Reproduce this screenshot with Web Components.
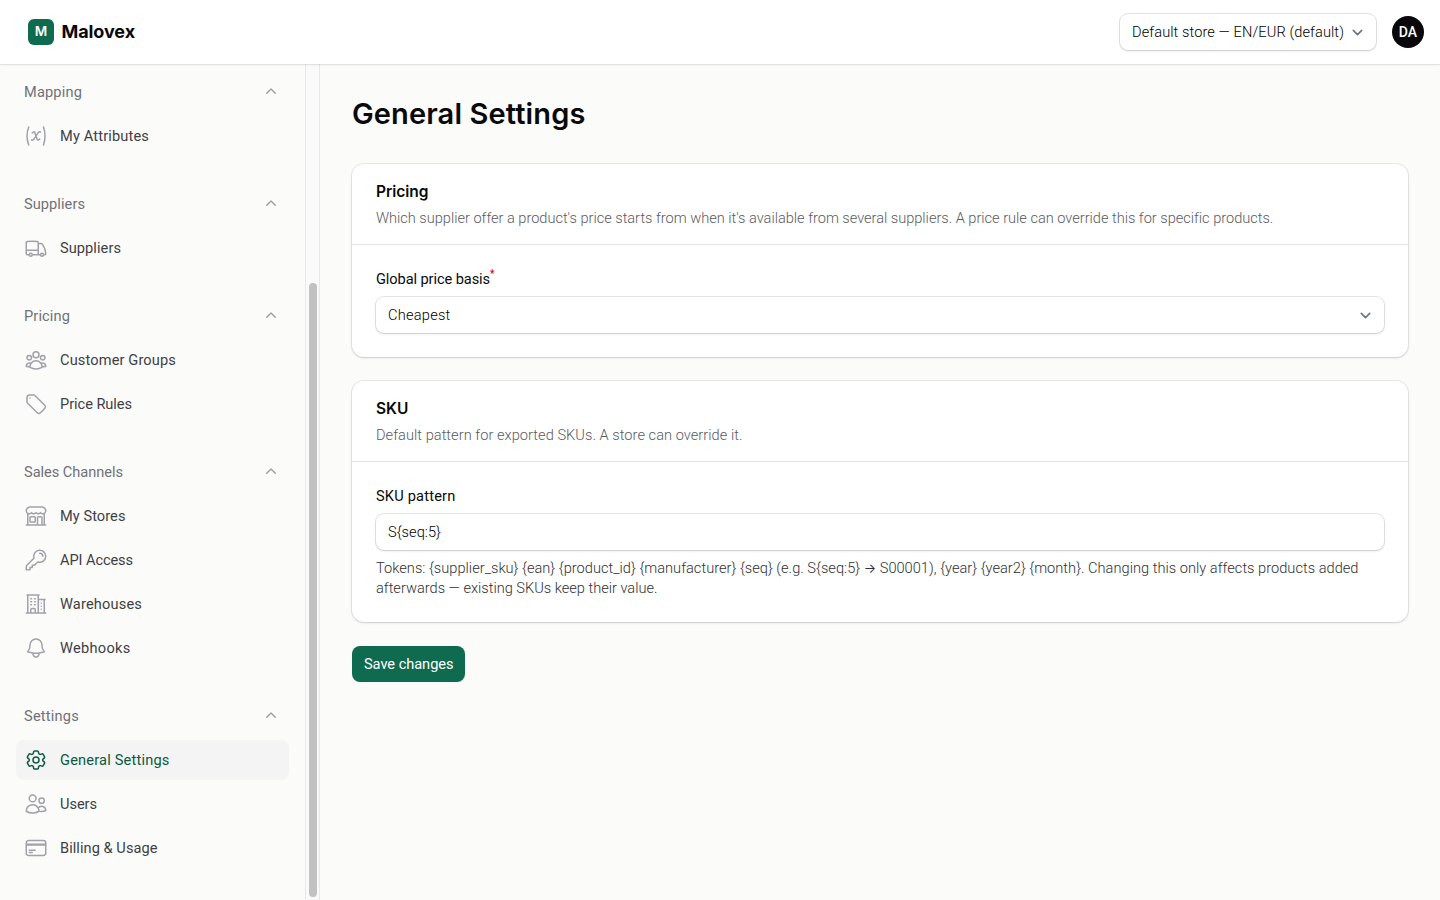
<!DOCTYPE html>
<html lang="en">
<head>
<meta charset="utf-8">
<title>General Settings - Malovex</title>
<style>
    body {
        margin: 0;
        background: #fbfbf9;
        color: #09090b;
        font: 300 14.6px/20px Roboto, Inter, "Liberation Sans", sans-serif;
        overflow: hidden;
    }
</style>
</head>
<body>

<app-shell>
    <top-bar slot="header"></top-bar>

    <nav-group slot="nav" label="Mapping" width="58">
        <nav-item icon="variable" width="89">My Attributes</nav-item>
    </nav-group>
    <nav-group slot="nav" label="Suppliers" width="61">
        <nav-item icon="truck" width="61">Suppliers</nav-item>
    </nav-group>
    <nav-group slot="nav" label="Pricing" width="46">
        <nav-item icon="group" width="116">Customer Groups</nav-item>
        <nav-item icon="tag" width="72">Price Rules</nav-item>
    </nav-group>
    <nav-group slot="nav" label="Sales Channels" width="99">
        <nav-item icon="store" width="65.5">My Stores</nav-item>
        <nav-item icon="key" width="73">API Access</nav-item>
        <nav-item icon="building" width="82">Warehouses</nav-item>
        <nav-item icon="bell" width="70.5">Webhooks</nav-item>
    </nav-group>
    <nav-group slot="nav" label="Settings" width="55">
        <nav-item icon="cog" width="109.5" active>General Settings</nav-item>
        <nav-item icon="users" width="37">Users</nav-item>
        <nav-item icon="card" width="97.5">Billing &amp; Usage</nav-item>
    </nav-group>

    <page-title>General Settings</page-title>

    <settings-section>
        <fit-text slot="heading" width="52.5">Pricing</fit-text>
        <fit-text slot="description" width="897">Which supplier offer a product's price starts from when it's available from several suppliers. A price rule can override this for specific products.</fit-text>
        <form-field required>
            <fit-text slot="label" width="114">Global price basis</fit-text>
            <input-box select><fit-text width="62.5">Cheapest</fit-text></input-box>
        </form-field>
    </settings-section>

    <settings-section>
        <fit-text slot="heading" width="32.5">SKU</fit-text>
        <fit-text slot="description" width="366.5">Default pattern for exported SKUs. A store can override it.</fit-text>
        <form-field>
            <fit-text slot="label" width="79.5">SKU pattern</fit-text>
            <input-box><fit-text width="53">S{seq:5}</fit-text></input-box>
            <fit-text slot="help" width="982.5">Tokens: {supplier_sku} {ean} {product_id} {manufacturer} {seq} (e.g. S{seq:5} <span style="font: 13px/1 Inter">→</span> S00001), {year} {year2} {month}. Changing this only affects products added</fit-text>
            <fit-text slot="help" width="281.5">afterwards — existing SKUs keep their value.</fit-text>
        </form-field>
    </settings-section>

    <save-button><fit-text width="89.5">Save changes</fit-text></save-button>
</app-shell>

<script>
const ICONS = {
    variable: 'M4.745 3A23.933 23.933 0 0 0 3 12c0 3.183.62 6.22 1.745 9M19.5 3c.967 2.78 1.5 5.817 1.5 9s-.533 6.22-1.5 9M8.25 8.885l1.444-.89a.75.75 0 0 1 1.105.402l2.402 7.206a.75.75 0 0 0 1.104.401l1.445-.889m-8.25.75.213.09a1.687 1.687 0 0 0 2.062-.617l4.45-6.676a1.688 1.688 0 0 1 2.062-.618l.213.09',
    truck: 'M8.25 18.75a1.5 1.5 0 0 1-3 0m3 0a1.5 1.5 0 0 0-3 0m3 0h6m-9 0H3.375a1.125 1.125 0 0 1-1.125-1.125V14.25m17.25 4.5a1.5 1.5 0 0 1-3 0m3 0a1.5 1.5 0 0 0-3 0m3 0h1.125c.621 0 1.129-.504 1.09-1.124a17.902 17.902 0 0 0-3.213-9.193 2.056 2.056 0 0 0-1.58-.86H14.25M16.5 18.75h-2.25m0-11.177v-.958c0-.568-.422-1.048-.987-1.106a48.554 48.554 0 0 0-10.026 0 1.106 1.106 0 0 0-.987 1.106v7.635m12-6.677v6.677m0 4.5v-4.5m0 0h-12',
    group: 'M18 18.72a9.094 9.094 0 0 0 3.741-.479 3 3 0 0 0-4.682-2.72m.94 3.198.001.031c0 .225-.012.447-.037.666A11.944 11.944 0 0 1 12 21c-2.17 0-4.207-.576-5.963-1.584A6.062 6.062 0 0 1 6 18.719m12 0a5.971 5.971 0 0 0-.941-3.197m0 0A5.995 5.995 0 0 0 12 12.75a5.995 5.995 0 0 0-5.058 2.772m0 0a3 3 0 0 0-4.681 2.72 8.986 8.986 0 0 0 3.74.477m.94-3.197a5.971 5.971 0 0 0-.94 3.197M15 6.75a3 3 0 1 1-6 0 3 3 0 0 1 6 0Zm6 3a2.25 2.25 0 1 1-4.5 0 2.25 2.25 0 0 1 4.5 0Zm-13.5 0a2.25 2.25 0 1 1-4.5 0 2.25 2.25 0 0 1 4.5 0Z',
    tag: 'M9.568 3H5.25A2.25 2.25 0 0 0 3 5.25v4.318c0 .597.237 1.17.659 1.591l9.581 9.581c.699.699 1.78.872 2.607.33a18.095 18.095 0 0 0 5.223-5.223c.542-.827.369-1.908-.33-2.607L11.16 3.66A2.25 2.25 0 0 0 9.568 3ZM6 6h.008v.008H6V6Z',
    store: 'M13.5 21v-7.5a.75.75 0 0 1 .75-.75h3a.75.75 0 0 1 .75.75V21m-4.5 0H2.36m11.14 0H18m0 0h3.64m-1.39 0V9.349M3.75 21V9.349m0 0a3.001 3.001 0 0 0 3.75-.615A2.993 2.993 0 0 0 9.75 9.75c.896 0 1.7-.393 2.25-1.016a2.993 2.993 0 0 0 2.25 1.016c.896 0 1.7-.393 2.25-1.015a3.001 3.001 0 0 0 3.75.614m-16.5 0a3.004 3.004 0 0 1-.621-4.72l1.189-1.19A1.5 1.5 0 0 1 5.378 3h13.243a1.5 1.5 0 0 1 1.06.44l1.19 1.189a3 3 0 0 1-.621 4.72M6.75 18h3.75a.75.75 0 0 0 .75-.75V13.5a.75.75 0 0 0-.75-.75H6.75a.75.75 0 0 0-.75.75v3.75c0 .414.336.75.75.75Z',
    key: 'M15.75 5.25a3 3 0 0 1 3 3m3 0a6 6 0 0 1-7.029 5.912c-.563-.097-1.159.026-1.563.43L10.5 17.25H8.25v2.25H6v2.25H2.25v-2.818c0-.597.237-1.17.659-1.591l6.499-6.499c.404-.404.527-1 .43-1.563A6 6 0 1 1 21.75 8.25Z',
    building: 'M2.25 21h19.5m-18-18v18m10.5-18v18m6-13.5V21M6.75 6.75h.75m-.75 3h.75m-.75 3h.75m3-6h.75m-.75 3h.75m-.75 3h.75M6.75 21v-3.375c0-.621.504-1.125 1.125-1.125h2.25c.621 0 1.125.504 1.125 1.125V21M3 3h12m-.75 4.5H21m-3.75 3.75h.008v.008h-.008v-.008Zm0 3h.008v.008h-.008v-.008Zm0 3h.008v.008h-.008v-.008Z',
    bell: 'M14.857 17.082a23.848 23.848 0 0 0 5.454-1.31A8.967 8.967 0 0 1 18 9.75V9A6 6 0 0 0 6 9v.75a8.967 8.967 0 0 1-2.312 6.022c1.733.64 3.56 1.085 5.455 1.31m5.714 0a24.255 24.255 0 0 1-5.714 0m5.714 0a3 3 0 1 1-5.714 0',
    cog: 'M9.594 3.94c.09-.542.56-.94 1.11-.94h2.593c.55 0 1.02.398 1.11.94l.213 1.281c.063.374.313.686.645.87.074.04.147.083.22.127.325.196.72.257 1.075.124l1.217-.456a1.125 1.125 0 0 1 1.37.49l1.296 2.247a1.125 1.125 0 0 1-.26 1.431l-1.003.827c-.293.241-.438.613-.43.992a7.723 7.723 0 0 1 0 .255c-.008.378.137.75.43.991l1.004.827c.424.35.534.955.26 1.43l-1.298 2.247a1.125 1.125 0 0 1-1.369.491l-1.217-.456c-.355-.133-.75-.072-1.076.124a6.47 6.47 0 0 1-.22.128c-.331.183-.581.495-.644.869l-.213 1.281c-.09.543-.56.94-1.11.94h-2.594c-.55 0-1.019-.398-1.11-.94l-.213-1.281c-.062-.374-.312-.686-.644-.87a6.52 6.52 0 0 1-.22-.127c-.325-.196-.72-.257-1.076-.124l-1.217.456a1.125 1.125 0 0 1-1.369-.49l-1.297-2.247a1.125 1.125 0 0 1 .26-1.431l1.004-.827c.292-.24.437-.613.43-.991a6.932 6.932 0 0 1 0-.255c.007-.38-.138-.751-.43-.992l-1.004-.827a1.125 1.125 0 0 1-.26-1.43l1.297-2.247a1.125 1.125 0 0 1 1.37-.491l1.216.456c.356.133.751.072 1.076-.124.072-.044.146-.086.22-.128.332-.183.582-.495.644-.869l.214-1.28ZM15 12a3 3 0 1 1-6 0 3 3 0 0 1 6 0Z',
    users: 'M15 19.128a9.38 9.38 0 0 0 2.625.372 9.337 9.337 0 0 0 4.121-.952 4.125 4.125 0 0 0-7.533-2.493M15 19.128v-.003c0-1.113-.285-2.16-.786-3.07M15 19.128v.106A12.318 12.318 0 0 1 8.624 21c-2.331 0-4.512-.645-6.374-1.766l-.001-.109a6.375 6.375 0 0 1 11.964-3.07M12 6.375a3.375 3.375 0 1 1-6.75 0 3.375 3.375 0 0 1 6.75 0Zm8.25 2.25a2.625 2.625 0 1 1-5.25 0 2.625 2.625 0 0 1 5.25 0Z',
    card: 'M2.25 8.25h19.5M2.25 9h19.5m-16.5 5.25h6m-6 2.25h3m-3.75 3h15a2.25 2.25 0 0 0 2.25-2.25V6.75A2.25 2.25 0 0 0 19.5 4.5h-15a2.25 2.25 0 0 0-2.25 2.25v10.5A2.25 2.25 0 0 0 4.5 19.5Z'
};

/* Shared base: attaches the root and fills it from render() */
class BaseElement extends HTMLElement {
    connectedCallback() {
        if (!this.shadowRoot) {
            this.attachShadow({mode: 'open'}).innerHTML = this.render();
        }
    }
}

class AppShell extends BaseElement {
    render() {
        return `
            <style>
                :host { display: grid; grid-template: 64px 836px / 320px 1fr; height: 900px; }
                header { grid-column: 1 / 3; z-index: 1; }
                aside { display: grid; grid-template-columns: 305px 15px; overflow: hidden; }
                nav { display: flex; flex-direction: column; gap: 28px; padding: 8px 16px; }
                .track {
                    box-sizing: border-box;
                    border: solid #e8e8ec;
                    border-width: 0 1px;
                    background: #fafafa;
                    padding: 219px 2px 3px 3px;
                }
                .thumb { height: 614px; border-radius: 4px; background: #c1c1c1; }
                main { padding: 32px; display: flex; flex-direction: column; gap: 24px; align-items: stretch; }
            </style>
            <header><slot name="header"></slot></header>
            <aside>
                <nav><slot name="nav"></slot></nav>
                <div class="track"><div class="thumb"></div></div>
            </aside>
            <main><slot></slot></main>
        `;
    }
}

class TopBar extends BaseElement {
    render() {
        return `
            <style>
                :host {
                    display: flex;
                    align-items: center;
                    box-sizing: border-box;
                    height: 64px;
                    padding: 0 16px 0 28px;
                    background: #fff;
                    box-shadow: 0 0 0 1px rgba(9, 9, 11, .05), 0 1px 2px rgba(0, 0, 0, .08);
                }
                .mark {
                    width: 26px;
                    height: 26px;
                    margin-right: 7.5px;
                    border-radius: 6px;
                    background: #0f6b50;
                    color: #fff;
                    font: 600 13.5px/25px Inter, sans-serif;
                    text-align: center;
                }
                .brand { font: 650 18px/26px Inter, sans-serif; }
                input-box { width: 256px; margin: 0 16px 0 auto; }
                .avatar {
                    width: 32px;
                    height: 32px;
                    border-radius: 50%;
                    background: #09090b;
                    color: #fff;
                    font-size: 14px;
                    font-weight: 500;
                    line-height: 32px;
                    text-align: center;
                }
            </style>
            <div class="mark">M</div>
            <fit-text class="brand" width="73.5">Malovex</fit-text>
            <input-box select><fit-text width="212">Default store — EN/EUR (default)</fit-text></input-box>
            <div class="avatar">DA</div>
        `;
    }
}

class NavGroup extends BaseElement {
    render() {
        return `
            <style>
                :host { display: flex; flex-direction: column; gap: 4px; }
                .head {
                    display: flex;
                    align-items: center;
                    justify-content: space-between;
                    height: 40px;
                    padding: 0 8px;
                    color: #71717a;
                    font-weight: 400;
                }
                svg { width: 20px; height: 20px; fill: #a1a1aa; }
            </style>
            <div class="head">
                <fit-text width="${this.getAttribute('width')}">${this.getAttribute('label')}</fit-text>
                <svg viewBox="0 0 20 20"><path d="M9.47 6.47a.75.75 0 0 1 1.06 0l4.25 4.25a.75.75 0 1 1-1.06 1.06L10 8.06l-3.72 3.72a.75.75 0 0 1-1.06-1.06l4.25-4.25Z"/></svg>
            </div>
            <slot></slot>
        `;
    }
}

class NavItem extends BaseElement {
    render() {
        return `
            <style>
                :host {
                    display: flex;
                    align-items: center;
                    gap: 12px;
                    height: 40px;
                    padding: 0 8px;
                    border-radius: 8px;
                    color: #3f3f46;
                    font-weight: 400;
                }
                :host([active]) { background: #f4f4f4; color: #0b5a41; }
                svg {
                    width: 24px;
                    height: 24px;
                    fill: none;
                    stroke: #a1a1aa;
                    stroke-width: 1.5;
                    stroke-linecap: round;
                    stroke-linejoin: round;
                }
                :host([active]) svg { stroke: #0b5a41; }
            </style>
            <svg viewBox="0 0 24 24"><path d="${ICONS[this.getAttribute('icon')]}"/></svg>
            <fit-text width="${this.getAttribute('width')}">${this.innerHTML}</fit-text>
        `;
    }
}

class PageTitle extends BaseElement {
    render() {
        return `
            <style>
                :host { display: block; margin-bottom: 8px; }
                h1 { margin: 0; font: 600 29px/36px Inter, sans-serif; }
            </style>
            <h1><fit-text width="233.5">${this.textContent}</fit-text></h1>
        `;
    }
}

class SettingsSection extends BaseElement {
    render() {
        return `
            <style>
                :host {
                    display: block;
                    border-radius: 12px;
                    background: #fff;
                    box-shadow: 0 0 0 1px rgba(9, 9, 11, .07), 0 1px 3px rgba(0, 0, 0, .1), 0 1px 2px -1px rgba(0, 0, 0, .1);
                }
                header { padding: 16px 24px; }
                h2 { margin: 0 0 4px; font: 600 15.5px/24px Inter, sans-serif; }
                p { margin: 0; color: #5a5a63; }
                .body { border-top: 1px solid #e4e4e7; padding: 24px; }
            </style>
            <header>
                <h2><slot name="heading"></slot></h2>
                <p><slot name="description"></slot></p>
            </header>
            <div class="body"><slot></slot></div>
        `;
    }
}

class FormField extends BaseElement {
    render() {
        return `
            <style>
                :host { display: grid; gap: 8px; }
                .label { display: flex; height: 20px; font-weight: 400; }
                sup { color: #e7000b; font-size: 10px; line-height: 10px; font-weight: 600; }
                .help { color: #303036; }
                .help:not(.filled) { display: none; }
            </style>
            <div class="label"><slot name="label"></slot>${this.hasAttribute('required') ? '<sup>*</sup>' : ''}</div>
            <slot></slot>
            <div class="help ${this.querySelector('[slot=help]') ? 'filled' : ''}"><slot name="help"></slot></div>
        `;
    }
}

class InputBox extends BaseElement {
    render() {
        return `
            <style>
                :host {
                    display: flex;
                    align-items: center;
                    justify-content: space-between;
                    box-sizing: border-box;
                    height: 36px;
                    padding: 0 8px 0 12px;
                    border-radius: 8px;
                    background: #fff;
                    color: #000;
                    box-shadow: 0 0 0 1px rgba(9, 9, 11, .1), 0 1px 3px rgba(0, 0, 0, .1), 0 1px 2px -1px rgba(0, 0, 0, .1);
                }
                svg { width: 21px; height: 21px; fill: none; stroke: #6b7280; stroke-width: 1.5; stroke-linecap: round; stroke-linejoin: round; }
            </style>
            <slot></slot>
            ${this.hasAttribute('select') ? '<svg viewBox="0 0 20 20"><path d="m6 8 4 4 4-4"/></svg>' : ''}
        `;
    }
}

class SaveButton extends BaseElement {
    render() {
        return `
            <style>
                :host { display: flex; }
                button {
                    height: 36px;
                    width: 113px;
                    padding: 0 0 0 12px;
                    border: 0;
                    border-radius: 8px;
                    background: #0f6b50;
                    color: #fff;
                    font: inherit;
                    font-weight: 400;
                    text-align: left;
                }
            </style>
            <button type="button"><slot></slot></button>
        `;
    }
}

/* One line of text, tracked so that it fills the given width */
class FitText extends BaseElement {
    render() {
        return `
            <style>
                :host { display: block; width: max-content; white-space: nowrap; }
            </style>
            <slot></slot>
        `;
    }

    fit() {
        const target = parseFloat(this.getAttribute('width'));
        const natural = this.getBoundingClientRect().width;
        this.style.letterSpacing = `${(target - natural) / this.textContent.length}px`;
    }
}

customElements.define('app-shell', AppShell);
customElements.define('top-bar', TopBar);
customElements.define('nav-group', NavGroup);
customElements.define('nav-item', NavItem);
customElements.define('page-title', PageTitle);
customElements.define('settings-section', SettingsSection);
customElements.define('form-field', FormField);
customElements.define('input-box', InputBox);
customElements.define('save-button', SaveButton);
customElements.define('fit-text', FitText);

/* Fit every line once the whole tree has its styles */
function fitAll(root) {
    root.querySelectorAll('*').forEach((el) => {
        if (el instanceof FitText) {
            el.fit();
        }
        if (el.shadowRoot) {
            fitAll(el.shadowRoot);
        }
    });
}
fitAll(document);
</script>
</body>
</html>
